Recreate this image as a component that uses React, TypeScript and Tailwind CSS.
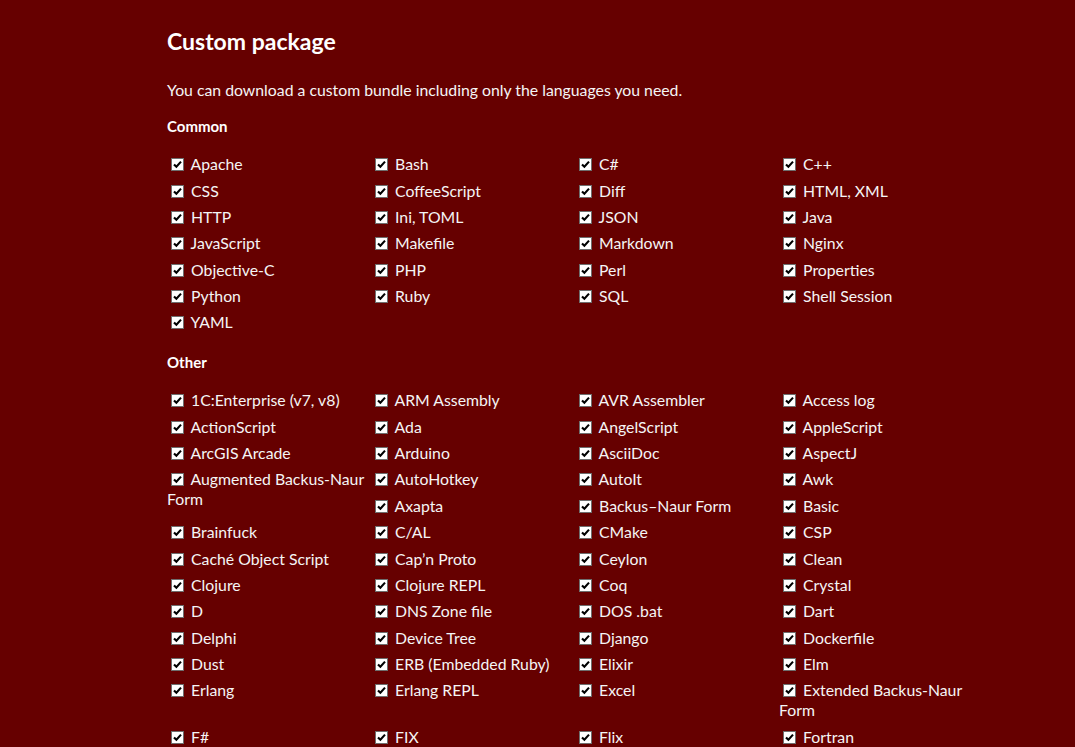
import React from "react";

const common = [
  "Apache", "Bash", "C#", "C++",
  "CSS", "CoffeeScript", "Diff", "HTML, XML",
  "HTTP", "Ini, TOML", "JSON", "Java",
  "JavaScript", "Makefile", "Markdown", "Nginx",
  "Objective-C", "PHP", "Perl", "Properties",
  "Python", "Ruby", "SQL", "Shell Session",
  "YAML",
];

const other = [
  "1C:Enterprise (v7, v8)", "ARM Assembly", "AVR Assembler", "Access log",
  "ActionScript", "Ada", "AngelScript", "AppleScript",
  "ArcGIS Arcade", "Arduino", "AsciiDoc", "AspectJ",
  "Augmented Backus-Naur Form", "AutoHotkey", "AutoIt", "Awk",
  "Axapta", "Backus\u2013Naur Form", "Basic",
  "Brainfuck", "C/AL", "CMake", "CSP",
  "Caché Object Script", "Cap\u2019n Proto", "Ceylon", "Clean",
  "Clojure", "Clojure REPL", "Coq", "Crystal",
  "D", "DNS Zone file", "DOS .bat", "Dart",
  "Delphi", "Device Tree", "Django", "Dockerfile",
  "Dust", "ERB (Embedded Ruby)", "Elixir", "Elm",
  "Erlang", "Erlang REPL", "Excel", "Extended Backus-Naur Form",
  "F#", "FIX", "Flix", "Fortran",
  "G-code (ISO 6983)", "GAMS", "GAUSS", "GLSL",
  "GML", "Gherkin", "Go", "Golo",
];

function Box() {
  return (
    <svg
      width="13"
      height="13"
      viewBox="0 0 13 13"
      className="inline-block align-[-1px] ml-[4px] mr-[3px]"
    >
      <rect x="0.5" y="0.5" width="12" height="12" fill="#ffffff" stroke="#6e6e6e" />
      <path d="M3 6.4 L5.4 8.8 L10 3.6" fill="none" stroke="#000000" strokeWidth="2.1" />
    </svg>
  );
}

function List({ items }: { items: string[] }) {
  return (
    <ul className="flow-root list-none m-0 p-0">
      {items.map((t) => (
        <li key={t} className="float-left w-1/4 py-[3.2px] leading-[20px]">
          <Box /> {t}
        </li>
      ))}
    </ul>
  );
}

export default function App() {
  return (
    <div
      className="min-h-screen bg-[#660000] text-[#f5f5f5] overflow-hidden"
      style={{ fontFamily: "Lato, 'Open Sans', sans-serif" }}
    >
      <div className="pl-[167px] pt-[27px]">
        <div className="w-[816px] text-[15.8px]">
          <h2 className="text-[23px] font-bold leading-[29px] text-white">Custom package</h2>
          <p className="mt-[24px] leading-[20px]">
            You can download a custom bundle including only the languages you need.
          </p>
          <h3 className="mt-[16px] font-bold leading-[20px] text-[15px] text-white">Common</h3>
          <div className="mt-[15px]">
            <List items={common} />
          </div>
          <h3 className="mt-[16px] font-bold leading-[20px] text-[15px] text-white">Other</h3>
          <div className="mt-[15.5px]">
            <List items={other} />
          </div>
        </div>
      </div>
    </div>
  );
}
